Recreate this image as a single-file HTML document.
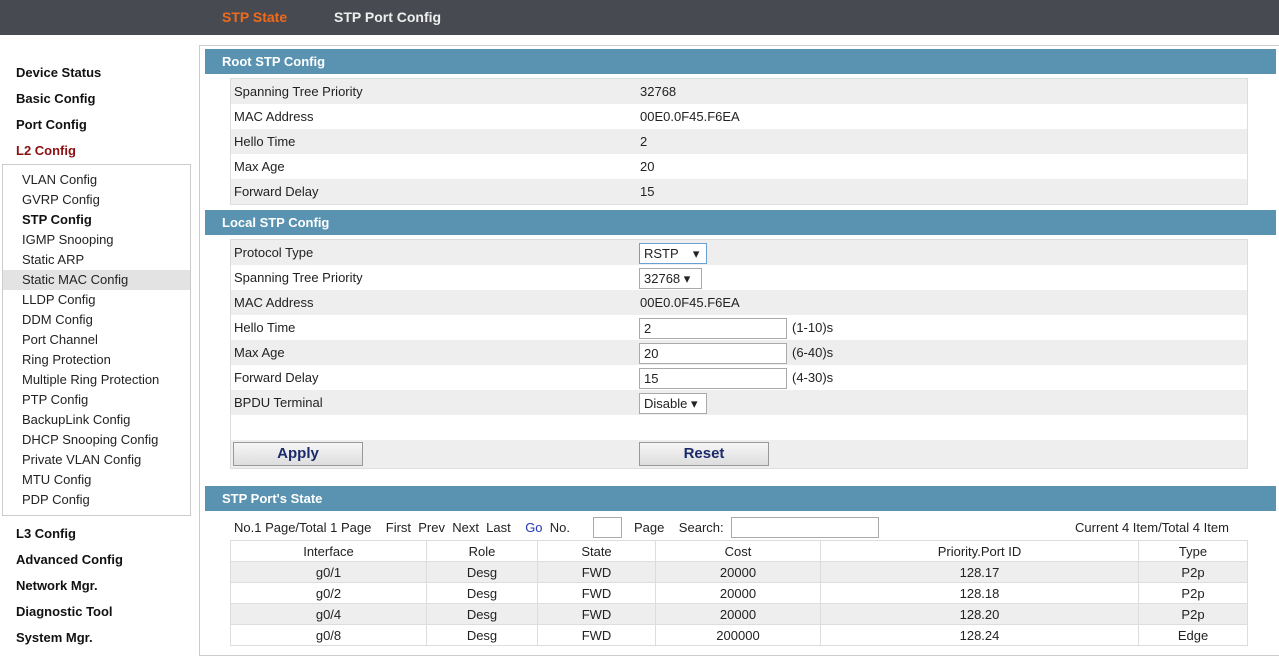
<!DOCTYPE html>
<html><head><meta charset="utf-8"><style>
*{margin:0;padding:0;box-sizing:border-box}
body{width:1279px;height:666px;position:relative;background:#fff;font-family:"Liberation Sans",sans-serif;font-size:13px;color:#222;overflow:hidden}
.a{position:absolute}
.top{left:0;top:0;width:1279px;height:35px;background:#474b51}
.tab{top:9px;font-weight:bold;font-size:14px;color:#eee}
.nav{left:16px;font-weight:bold;font-size:13px;color:#111}
.sub{left:2px;top:164px;width:189px;height:352px;border:1px solid #ccc}
.si{left:22px;font-size:13px;color:#222}
.hdr{left:205px;width:1071px;height:25px;background:#5a93b1;color:#fff;font-weight:bold;font-size:13px;padding:5px 0 0 17px}
.tbl{left:230px;width:1018px;border:1px solid #ddd}
.row{height:25px;position:relative;line-height:25px}
.row:nth-child(odd){background:#eee}
.row .l{position:absolute;left:3px}
.row .v{position:absolute;left:409px}
.inp{position:absolute;top:3px;height:21px;border:1px solid #aaa;background:#fff;line-height:19px;padding-left:4px}
.btn{position:absolute;top:2px;width:130px;height:24px;border:1px solid #999;background:linear-gradient(#f6f6f6,#ddd);text-align:center;font-weight:bold;font-size:15px;color:#1a2a6a;line-height:22px}
table{border-collapse:collapse;position:absolute;left:230px;top:540px;width:1018px;font-size:13px}
td{border:1px solid #ddd;text-align:center;height:21px;padding:0}
tr:nth-child(even) td{background:#eee}
</style></head><body>
<div class="a top"></div>
<div class="a tab" style="left:222px;color:#f06a1c">STP State</div>
<div class="a tab" style="left:334px">STP Port Config</div>

<div class="a nav" style="top:65px">Device Status</div>
<div class="a nav" style="top:91px">Basic Config</div>
<div class="a nav" style="top:117px">Port Config</div>
<div class="a nav" style="top:143px;color:#8b1010">L2 Config</div>
<div class="a sub"></div>
<div class="a" style="left:3px;top:270px;width:187px;height:20px;background:#e3e3e3"></div>
<div class="a si" style="top:172px">VLAN Config</div>
<div class="a si" style="top:192px">GVRP Config</div>
<div class="a si" style="top:212px;font-weight:bold;color:#111">STP Config</div>
<div class="a si" style="top:232px">IGMP Snooping</div>
<div class="a si" style="top:252px">Static ARP</div>
<div class="a si" style="top:272px">Static MAC Config</div>
<div class="a si" style="top:292px">LLDP Config</div>
<div class="a si" style="top:312px">DDM Config</div>
<div class="a si" style="top:332px">Port Channel</div>
<div class="a si" style="top:352px">Ring Protection</div>
<div class="a si" style="top:372px">Multiple Ring Protection</div>
<div class="a si" style="top:392px">PTP Config</div>
<div class="a si" style="top:412px">BackupLink Config</div>
<div class="a si" style="top:432px">DHCP Snooping Config</div>
<div class="a si" style="top:452px">Private VLAN Config</div>
<div class="a si" style="top:472px">MTU Config</div>
<div class="a si" style="top:492px">PDP Config</div>
<div class="a nav" style="top:526px">L3 Config</div>
<div class="a nav" style="top:552px">Advanced Config</div>
<div class="a nav" style="top:578px">Network Mgr.</div>
<div class="a nav" style="top:604px">Diagnostic Tool</div>
<div class="a nav" style="top:630px">System Mgr.</div>

<div class="a" style="left:199px;top:45px;width:1082px;height:611px;border:1px solid #ccc"></div>
<div class="a hdr" style="top:49px">Root STP Config</div>
<div class="a tbl" style="top:78px">
<div class="row"><span class="l">Spanning Tree Priority</span><span class="v">32768</span></div>
<div class="row"><span class="l">MAC Address</span><span class="v">00E0.0F45.F6EA</span></div>
<div class="row"><span class="l">Hello Time</span><span class="v">2</span></div>
<div class="row"><span class="l">Max Age</span><span class="v">20</span></div>
<div class="row"><span class="l">Forward Delay</span><span class="v">15</span></div>
</div>
<div class="a hdr" style="top:210px">Local STP Config</div>
<div class="a tbl" style="top:239px">
<div class="row"><span class="l">Protocol Type</span><span class="inp" style="left:408px;width:68px;border-color:#6aa0d0">RSTP &nbsp;&nbsp;&nbsp;▾</span></div>
<div class="row"><span class="l">Spanning Tree Priority</span><span class="inp" style="left:408px;width:63px">32768 ▾</span></div>
<div class="row"><span class="l">MAC Address</span><span class="v">00E0.0F45.F6EA</span></div>
<div class="row"><span class="l">Hello Time</span><span class="inp" style="left:408px;width:148px">2</span><span class="v" style="left:561px">(1-10)s</span></div>
<div class="row"><span class="l">Max Age</span><span class="inp" style="left:408px;width:148px">20</span><span class="v" style="left:561px">(6-40)s</span></div>
<div class="row"><span class="l">Forward Delay</span><span class="inp" style="left:408px;width:148px">15</span><span class="v" style="left:561px">(4-30)s</span></div>
<div class="row"><span class="l">BPDU Terminal</span><span class="inp" style="left:408px;width:68px">Disable ▾</span></div>
<div class="row" style="background:#fff"></div>
<div class="row" style="background:#eee;height:28px"><span class="btn" style="left:2px">Apply</span><span class="btn" style="left:408px">Reset</span></div>
</div>
<div class="a hdr" style="top:486px">STP Port's State</div>
<div class="a" style="left:234px;top:520px">No.1 Page/Total 1 Page &nbsp;&nbsp;&nbsp;First &nbsp;Prev &nbsp;Next &nbsp;Last &nbsp;&nbsp;&nbsp;<span style="color:#2238b8">Go</span> &nbsp;No.</div>
<div class="a" style="left:593px;top:517px;width:29px;height:21px;border:1px solid #aaa"></div>
<div class="a" style="left:634px;top:520px">Page &nbsp;&nbsp;&nbsp;Search:</div>
<div class="a" style="left:731px;top:517px;width:148px;height:21px;border:1px solid #aaa"></div>
<div class="a" style="left:1075px;top:520px">Current 4 Item/Total 4 Item</div>
<table>
<tr><td style="width:196px">Interface</td><td style="width:111px">Role</td><td style="width:118px">State</td><td style="width:165px">Cost</td><td style="width:318px">Priority.Port ID</td><td>Type</td></tr>
<tr><td>g0/1</td><td>Desg</td><td>FWD</td><td>20000</td><td>128.17</td><td>P2p</td></tr>
<tr><td>g0/2</td><td>Desg</td><td>FWD</td><td>20000</td><td>128.18</td><td>P2p</td></tr>
<tr><td>g0/4</td><td>Desg</td><td>FWD</td><td>20000</td><td>128.20</td><td>P2p</td></tr>
<tr><td>g0/8</td><td>Desg</td><td>FWD</td><td>200000</td><td>128.24</td><td>Edge</td></tr>
</table>
</body></html>
